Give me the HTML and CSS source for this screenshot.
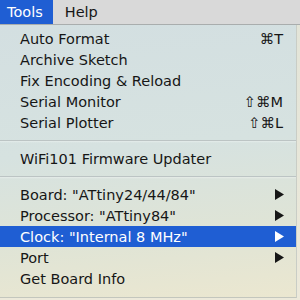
FILE: index.html
```html
<!DOCTYPE html>
<html lang="en">
<head>
    <meta charset="UTF-8">
    <title>Tools menu</title>
    <link rel="stylesheet" href="styles.css">
</head>
<body>
    <div class="menubar">
        <span class="menubar-item active">Tools</span>
        <span class="menubar-item">Help</span>
    </div>
    <div class="menu">
        <div class="item"><span>Auto Format</span><span class="key">⌘T</span></div>
        <div class="item"><span>Archive Sketch</span></div>
        <div class="item"><span>Fix Encoding &amp; Reload</span></div>
        <div class="item"><span>Serial Monitor</span><span class="key">⇧⌘M</span></div>
        <div class="item"><span>Serial Plotter</span><span class="key">⇧⌘L</span></div>
        <div class="separator"></div>
        <div class="item"><span>WiFi101 Firmware Updater</span></div>
        <div class="separator"></div>
        <div class="item"><span>Board: "ATtiny24/44/84"</span><svg class="arrow" viewBox="0 0 9 11"><path d="M0 0 L9 5.5 L0 11 Z"/></svg></div>
        <div class="item"><span>Processor: "ATtiny84"</span><svg class="arrow" viewBox="0 0 9 11"><path d="M0 0 L9 5.5 L0 11 Z"/></svg></div>
        <div class="item selected"><span>Clock: "Internal 8 MHz"</span><svg class="arrow" viewBox="0 0 9 11"><path d="M0 0 L9 5.5 L0 11 Z"/></svg></div>
        <div class="item"><span>Port</span><svg class="arrow" viewBox="0 0 9 11"><path d="M0 0 L9 5.5 L0 11 Z"/></svg></div>
        <div class="item"><span>Get Board Info</span></div>
    </div>
</body>
</html>
```

FILE: styles.css
```css
html, body {
    width : 300px;
    height: 300px;
}
body {
    margin  : 0;
    overflow: hidden;

    font-family: "DejaVu Sans", sans-serif;
    font-size  : 14.5px;
    color      : #161616;

    background: linear-gradient(#e2e4d8, #ece9da);
}
.menubar {
    height: 24px;
    display    : flex;
    align-items: stretch;

    background-color: #d9d9d9;
    border-bottom   : 1px solid #a9adad;
}
.menubar-item {
    display    : flex;
    align-items: center;
    padding    : 0 10px 0 12px;
}
.menubar-item.active {
    padding         : 0 10px 0 7px;
    color           : #fff;
    background-color: #1f5ed3;
}
.menu {
    width  : 296px;
    height : 269px;
    padding: 3px 0 0 0;

    border-right : 1px solid #c9cdc6;
    border-bottom: 1px solid #c3c6bd;

    background: linear-gradient(175deg, #d3dfe1 0%, #d6e2e0 45%, #dfe4d6 75%, #ebe7d0 100%);
}
.item {
    height : 21px;
    display: flex;
    align-items    : center;
    justify-content: space-between;
    padding: 0 12px 0 20px;
}
.item.selected {
    color           : #fff;
    background-color: #1f5ed3;
}
.key {
    padding-right: 1px;
}
.arrow {
    width : 9px;
    height: 11px;
    fill  : #161616;
}
.selected .arrow {
    fill: #fff;
}
.separator {
    height    : 6px;
    margin    : 7px 0 1px 0;
    border-top: 1px solid #bcc4c4;
    background: linear-gradient(rgba(255,255,255,0.35), rgba(255,255,255,0) 2px);
}
```
